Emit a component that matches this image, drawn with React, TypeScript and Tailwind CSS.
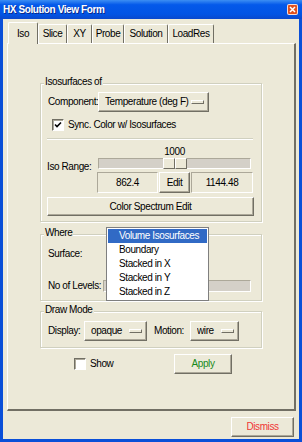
import React from "react";

const raised =
  "bg-[#ECE9D8] border border-t-white border-l-white border-r-[#716F64] border-b-[#716F64] shadow-[inset_-1px_-1px_0_#ACA899]";
const sunken =
  "border border-t-[#ACA899] border-l-[#ACA899] border-r-white border-b-white";
const etched =
  "relative border border-[#D0D0BF] shadow-[inset_1px_1px_0_#fff,1px_1px_0_#fff]";

function OptionMenu({ label, w, className = "" }: { label: string; w: string; className?: string }) {
  return (
    <div className={`${raised} ${w} h-[20px] flex items-center pl-[6px] pr-[4px] shrink-0 ${className}`}>
      <span className="flex-1 whitespace-nowrap overflow-hidden">{label}</span>
      <span className="w-[13px] h-[4px] bg-[#ECE9D8] border border-t-white border-l-white border-r-[#716F64] border-b-[#716F64] shrink-0" />
    </div>
  );
}

function Check({ checked }: { checked?: boolean }) {
  return (
    <div className="w-[12px] h-[12px] bg-white border border-t-[#716F64] border-l-[#716F64] border-r-white border-b-white shadow-[inset_1px_1px_0_#ACA899] flex items-center justify-center shrink-0">
      {checked && (
        <svg width="8" height="8" viewBox="0 0 8 8">
          <path d="M1 3.5 L3 5.5 L7 1.5" stroke="#000" strokeWidth="1.6" fill="none" />
        </svg>
      )}
    </div>
  );
}

function GroupLabel({ text }: { text: string }) {
  return (
    <span className="absolute left-[3px] top-[-8px] px-[1px] bg-[#ECE9D8] leading-[12px] whitespace-nowrap">
      {text}
    </span>
  );
}

export default function App() {
  const tabs = [
    { t: "Iso", w: "w-[30px]" },
    { t: "Slice", w: "w-[29px]" },
    { t: "XY", w: "w-[25px]" },
    { t: "Probe", w: "w-[32px]" },
    { t: "Solution", w: "w-[44px]" },
    { t: "LoadRes", w: "w-[46px]" },
  ];
  return (
    <div
      className="w-[302px] h-[442px] bg-[#0A4FD8] flex flex-col text-[10px] tracking-[-0.4px] leading-[12px] text-black overflow-hidden whitespace-nowrap"
      style={{ fontFamily: '"Liberation Sans", Arial, sans-serif' }}
    >
      {/* title bar */}
      <div className="h-[19px] shrink-0 flex items-center pl-[3px] pr-[4px] bg-[linear-gradient(to_bottom,#3C8EF3_0%,#0459EA_25%,#0254E4_75%,#0A48CC_100%)]">
        <span className="flex-1 font-bold text-white text-[10px] [text-shadow:1px_1px_0_#0A2A8A]">
          HX Solution View Form
        </span>
        <div className="w-[11px] h-[11px] rounded-[2px] border border-white/80 bg-[#E0501E] flex items-center justify-center">
          <svg width="7" height="7" viewBox="0 0 7 7">
            <path d="M1 1 L6 6 M6 1 L1 6" stroke="#fff" strokeWidth="1.5" />
          </svg>
        </div>
      </div>

      {/* body */}
      <div className="flex-1 mx-[3px] mb-[3px] bg-[#ECE9D8] flex flex-col pl-[4px] pr-[3px] pt-[3px]">
        {/* tabs */}
        <div className="h-[21px] flex items-end pl-[1px]">
          {tabs.map((tb, i) => (
            <div
              key={tb.t}
              className={`${tb.w} flex items-center justify-center border-t border-l border-r border-t-white border-l-white border-r-[#716F64] rounded-t-[2px] bg-[#ECE9D8] ${
                i === 0 ? "h-[22px] mb-[-1px] relative z-10 pt-[1px]" : "h-[19px]"
              }`}
            >
              {tb.t}
            </div>
          ))}
        </div>

        {/* panel */}
        <div className="h-[368px] border-t border-l border-t-white border-l-white border-r-2 border-b-2 border-r-[#716F64] border-b-[#716F64] flex flex-col">
          {/* Isosurfaces group */}
          <div className={`${etched} mt-[39px] ml-[32px] w-[222px] flex flex-col pb-[5px]`}>
            <GroupLabel text="Isosurfaces of" />
            <div className="mt-[8px] h-[20px] flex items-center pl-[7px]">
              <span className="w-[50px]">Component:</span>
              <OptionMenu label="Temperature (deg F)" w="w-[111px]" />
            </div>
            <div className="mt-[7px] h-[12px] flex items-center pl-[11px]">
              <Check checked />
              <span className="ml-[4px]">Sync. Color w/ Isosurfaces</span>
            </div>
            <div className="mt-[7px] ml-[6px] w-[206px] h-[2px] border-t border-t-[#D0D0BF] border-b border-b-white" />
            <div className="flex">
              <div className="w-[56px] pl-[6px] self-center">Iso Range:</div>
              <div className="flex flex-col">
                <div className="mt-[6px] h-[12px] w-[153px] ml-[1px] text-center">1000</div>
                <div className="ml-[1px] w-[153px] h-[11px] bg-[#D4D0C8] border border-t-[#ACA899] border-l-[#ACA899] border-r-white border-b-white flex">
                  <div className="ml-[64px] w-[24px] h-[11px] mt-[-1px] flex">
                    <div className="w-[12px] h-full bg-[#ECE9D8] border border-t-white border-l-white border-r-[#716F64] border-b-[#716F64]" />
                    <div className="w-[12px] h-full bg-[#ECE9D8] border border-t-white border-l-white border-r-[#716F64] border-b-[#716F64]" />
                  </div>
                </div>
                <div className="mt-[3px] h-[21px] flex gap-[1px]">
                  <div className={`${sunken} w-[61px] flex items-center justify-center`}>862.4</div>
                  <div className={`${raised} w-[31px] flex items-center justify-center`}>Edit</div>
                  <div className={`${sunken} w-[62px] flex items-center justify-center`}>1144.48</div>
                </div>
              </div>
            </div>
            <div className={`${raised} mt-[4px] ml-[6px] w-[207px] h-[19px] flex items-center justify-center`}>
              Color Spectrum Edit
            </div>
          </div>

          {/* Where group */}
          <div className={`${etched} mt-[12px] ml-[32px] w-[222px] flex flex-col pb-[8px]`}>
            <GroupLabel text="Where" />
            <div className="mt-[9px] h-[20px] flex items-center pl-[7px] relative">
              <span className="w-[58px]">Surface:</span>
              <OptionMenu label="" w="w-[101px]" />
              {/* dropdown list overlay */}
              <div className="absolute left-[65px] top-[-17px] w-[103px] h-[74px] bg-white border border-[#7F7F7F] z-20 flex flex-col pt-[1px] px-[1px]">
                {["Volume Isosurfaces", "Boundary", "Stacked in X", "Stacked in Y", "Stacked in Z"].map((it, i) => (
                  <div
                    key={it}
                    className={`h-[14px] flex items-center pl-[11px] ${
                      i === 0 ? "bg-[#316AC5] text-white" : ""
                    }`}
                  >
                    {it}
                  </div>
                ))}
              </div>
            </div>
            <div className="mt-[16px] h-[12px] flex items-center pl-[7px]">
              <span className="w-[55px]">No of Levels:</span>
              <div className="w-[148px] h-[12px] bg-[#D4D0C8] border border-t-[#ACA899] border-l-[#ACA899] border-r-white border-b-white" />
            </div>
          </div>

          {/* Draw Mode group */}
          <div className={`${etched} mt-[10px] ml-[32px] w-[222px] flex flex-col pb-[6px]`}>
            <GroupLabel text="Draw Mode" />
            <div className="mt-[9px] h-[20px] flex items-center pl-[7px]">
              <span className="w-[36px]">Display:</span>
              <OptionMenu label="opaque" w="w-[63px]" />
              <span className="ml-[7px] w-[36px]">Motion:</span>
              <OptionMenu label="wire" w="w-[49px]" />
            </div>
          </div>

          {/* Show / Apply */}
          <div className="mt-[6px] h-[20px] flex items-center">
            <div className="w-[166px] pl-[66px] flex items-center">
              <Check />
              <span className="ml-[4px]">Show</span>
            </div>
            <div className={`${raised} w-[58px] h-[20px] flex items-center justify-center text-[#18891A]`}>Apply</div>
          </div>
        </div>

        {/* Dismiss */}
        <div className="mt-[6px] flex justify-end pr-[2px]">
          <div className={`${raised} w-[63px] h-[20px] flex items-center justify-center text-[#F03535]`}>Dismiss</div>
        </div>
      </div>
    </div>
  );
}
